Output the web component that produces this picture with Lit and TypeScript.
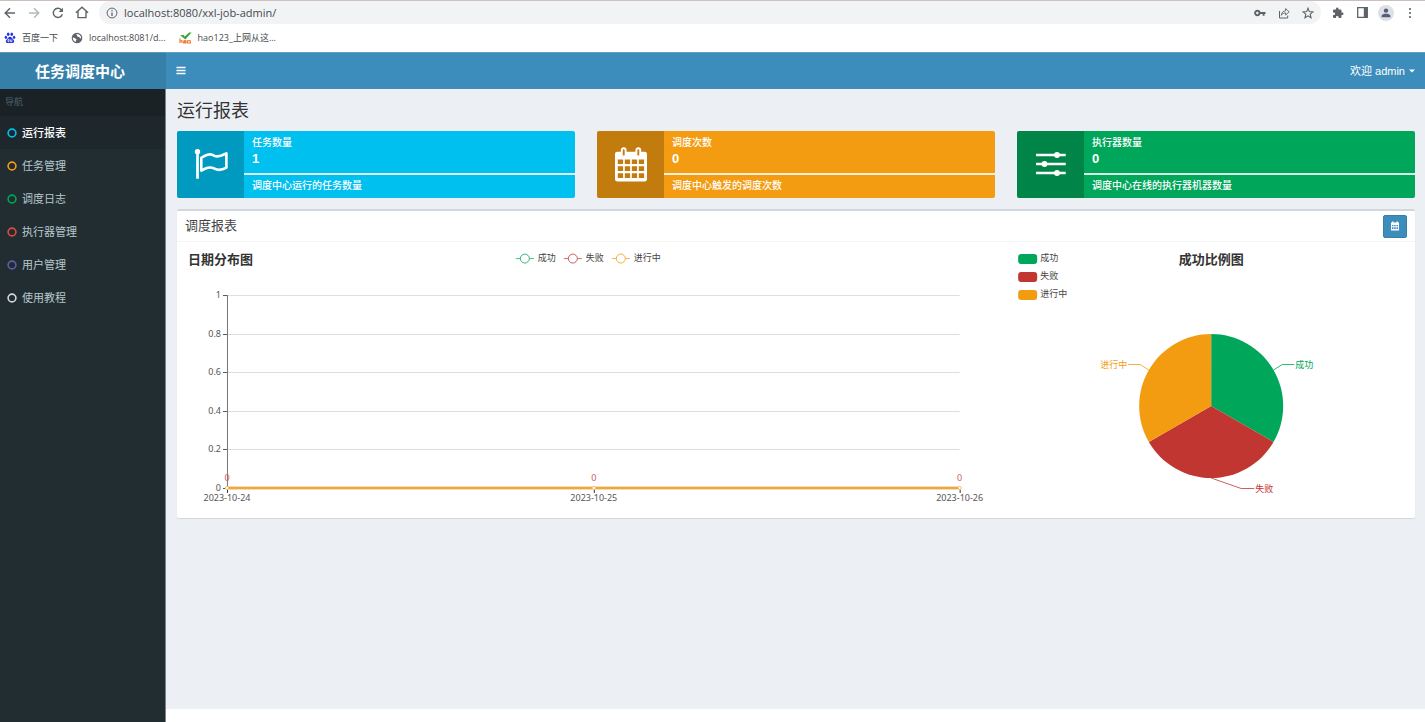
import { LitElement, html, svg, css } from "lit";
import type { TemplateResult } from "lit";
import { customElement, property, state } from "lit/decorators.js";
import { classMap } from "lit/directives/class-map.js";

const SUCCESS = "#00a65a";
const FAIL = "#c23632";
const RUNNING = "#f39c12";

const SERIES = [
  { name: "成功", color: SUCCESS },
  { name: "失败", color: FAIL },
  { name: "进行中", color: RUNNING },
];

/** Base for charts that redraw to the width of their column. */
class FluidChart extends LitElement {
  @state() protected width = 0;
  private observer?: ResizeObserver;

  connectedCallback() {
    super.connectedCallback();
    this.observer = new ResizeObserver((entries) => {
      this.width = Math.round(entries[0].contentRect.width);
    });
    this.observer.observe(this);
  }

  firstUpdated() {
    this.width = Math.round(this.getBoundingClientRect().width);
  }

  disconnectedCallback() {
    super.disconnectedCallback();
    this.observer?.disconnect();
  }

  static chartStyles = css`
    :host {
      display: block;
      min-width: 0;
      font-family: "Noto Sans CJK SC", sans-serif;
    }
    svg {
      display: block;
      width: 100%;
    }
    .title {
      font-size: 13px;
      font-weight: 700;
      fill: #333;
    }
    .label {
      font-size: 9px;
      fill: #444;
    }
    .tick {
      font-size: 9px;
      font-family: "Noto Sans", sans-serif;
      fill: #555;
    }
    .value {
      font-size: 9px;
      font-family: "Noto Sans", sans-serif;
      fill: #d0605e;
    }
    .end {
      text-anchor: end;
    }
    .middle {
      text-anchor: middle;
    }
  `;
}

@customElement("trend-chart")
export class TrendChart extends FluidChart {
  @property({ attribute: false }) dates: string[] = [];

  static styles = [FluidChart.chartStyles];

  render() {
    const w = this.width || 819;
    const left = 50;
    const right = w - 36;
    const top = 53;
    const bottom = 246;
    const ticks = [0, 0.2, 0.4, 0.6, 0.8, 1];
    const y = (v: number) => Math.round(bottom - v * (bottom - top));
    const x = (i: number) => Math.round(left + (i * (right - left)) / (this.dates.length - 1));
    const legendLeft = Math.round((w - 142) / 2);

    return html`<svg height="276" viewBox="0 0 ${w} 276" role="img" aria-label="日期分布图">
      <text class="title" x="11" y="22">日期分布图</text>
      ${SERIES.map((s, i) => {
        const sx = legendLeft + i * 48;
        return svg`<g>
          <path d="M${sx} 16.5h18" stroke=${s.color} stroke-opacity=".7" />
          <circle cx=${sx + 9} cy="16.5" r="4.5" fill="#fff" stroke=${s.color} stroke-opacity=".8" />
          <text class="label" x=${sx + 22} y="19">${s.name}</text>
        </g>`;
      })}
      ${ticks.map(
        (t) => svg`<g>
          <path d="M${left} ${y(t) + 0.5}H${right}" stroke="#ddd" />
          <path d="M${left - 4} ${y(t) + 0.5}h4" stroke="#555" />
          <text class="tick end" x=${left - 6} y=${y(t) + 3}>${t}</text>
        </g>`
      )}
      <path d="M${left + 0.5} ${top}V${bottom}" stroke="#777" />
      <path d="M${left} ${bottom}H${right}" stroke="#f8dcae" stroke-width="4" />
      <path d="M${left} ${bottom}H${right}" stroke="#eba744" stroke-width="2" />
      ${this.dates.map(
        (d, i) => svg`<g>
          <path d="M${x(i) + 0.5} ${bottom + 1}v4" stroke="#333" />
          <circle cx=${x(i)} cy=${bottom} r="1.6" fill="#fff" stroke="#f3be70" />
          <text class="value middle" x=${x(i)} y=${bottom - 7}>0</text>
          <text class="tick middle" x=${x(i)} y=${bottom + 13}>${d}</text>
        </g>`
      )}
    </svg>`;
  }
}

@customElement("ratio-chart")
export class RatioChart extends FluidChart {
  static styles = [FluidChart.chartStyles];

  render() {
    const w = this.width || 409;
    const cx = Math.round(w / 2);
    const cy = 164;
    const r = 72;
    const at = (turn: number) => {
      const a = turn * 2 * Math.PI;
      return `${(cx + r * Math.sin(a)).toFixed(2)} ${(cy - r * Math.cos(a)).toFixed(2)}`;
    };

    return html`<svg height="276" viewBox="0 0 ${w} 276" role="img" aria-label="成功比例图">
      ${SERIES.map(
        (s, i) => svg`<g>
          <rect x="12" y=${12 + i * 18} width="19" height="10" rx="3" fill=${s.color} />
          <text class="label" x="34" y=${19 + i * 18}>${s.name}</text>
          <path d="M${cx} ${cy}L${at(i / 3)}A${r} ${r} 0 0 1 ${at((i + 1) / 3)}Z" fill=${s.color} />
        </g>`
      )}
      <text class="title middle" x=${cx} y="22">成功比例图</text>
      <g fill="none" stroke-opacity=".8">
        <path d="M${at(1 / 6)}L${cx + 71} 122.5H${cx + 83}" stroke=${SUCCESS} />
        <path d="M${at(1 / 2)}L${cx + 30} 246.5H${cx + 43}" stroke=${FAIL} />
        <path d="M${at(5 / 6)}L${cx - 71} 122.5H${cx - 83}" stroke=${RUNNING} />
      </g>
      <g font-size="9">
        <text x=${cx + 84} y="126" fill=${SUCCESS}>成功</text>
        <text x=${cx + 44} y="250" fill=${FAIL}>失败</text>
        <text class="end" x=${cx - 84} y="126" fill=${RUNNING}>进行中</text>
      </g>
    </svg>`;
  }
}

const calendarCells = [0, 1, 2]
  .flatMap((row) => [0, 1, 2, 3].map((col) => `M${4.8 + col * 7} ${12.4 + row * 6.9}v4.7h5.3v-4.7z`))
  .join("");

const icons: Record<string, TemplateResult> = {
  flag: html`<svg width="36" height="36" viewBox="0 0 36 36" aria-hidden="true">
    <circle cx="4.5" cy="4.7" r="2.7" fill="#fff" />
    <path d="M4.5 5v26.800" stroke="#fff" stroke-width="2.7" />
    <path
      d="M8.300 10.800C12.500 8.200 16.500 5.800 21.500 8.800C25.500 10.800 29.500 8.300 33.400 6.400V20.600C29.500 22.800 26 24.200 21.500 21.600C16.500 19 12.500 21.300 8.300 23.700Z"
      fill="none" stroke="#fff" stroke-width="2.6" stroke-linejoin="round" />
  </svg>`,
  calendar: html`<svg width="36" height="36" viewBox="0 0 36 36" aria-hidden="true">
    <path fill="#fff" fill-rule="evenodd"
      d="M4.3 4.7h27.4a2.3 2.3 0 0 1 2.3 2.3v25.2a2.3 2.3 0 0 1-2.3 2.3H4.3a2.3 2.3 0 0 1-2.3-2.3V7a2.3 2.3 0 0 1 2.3-2.3z${calendarCells}" />
    <g fill="#c27d0e" stroke="#fff" stroke-width="1.9">
      <rect x="8.8" y="1.2" width="3.800" height="8.3" rx="1.8" />
      <rect x="23.4" y="1.2" width="3.800" height="8.3" rx="1.8" />
    </g>
  </svg>`,
  sliders: html`<svg width="36" height="36" viewBox="0 0 36 36" aria-hidden="true">
    <path d="M3 8h29.7M3 17h29.7M3 26h29.7" stroke="#fff" stroke-width="2.4" />
    <g fill="#fff"><circle cx="24" cy="8" r="2.9" /><circle cx="11.5" cy="17" r="2.9" /><circle cx="24" cy="26" r="2.9" /></g>
  </svg>`,
};

@customElement("info-card")
export class InfoCard extends LitElement {
  @property() icon = "";
  @property() tone = "";
  @property() label = "";
  @property() value = "";
  @property() note = "";

  static styles = css`
    :host {
      display: block;
      min-width: 0;
    }
    .card {
      display: grid;
      grid-template-columns: 67px 1fr;
      min-height: 67px;
      border-radius: 2px;
      overflow: hidden;
      color: #fff;
      font: 10px/14px "Liberation Sans", "Noto Sans CJK SC", sans-serif;
      font-weight: 500;
    }
    .aqua { background: #00c0ef; }
    .yellow { background: #f39c12; }
    .green { background: #00a65a; }
    .icon {
      display: grid;
      place-items: center;
      background: rgba(0, 0, 0, 0.2);
    }
    .top {
      padding: 5px 8px 6px;
    }
    .value {
      display: block;
      font-size: 13px;
      font-weight: 700;
      line-height: 17px;
    }
    .note {
      padding: 4px 8px;
      border-top: 2px solid rgba(255, 255, 255, 0.85);
    }
  `;

  render() {
    return html`<div class="card ${classMap({ [this.tone]: true })}">
      <span class="icon">${icons[this.icon]}</span>
      <div>
        <div class="top">${this.label}<b class="value">${this.value}</b></div>
        <div class="note">${this.note}</div>
      </div>
    </div>`;
  }
}

@customElement("browser-bar")
export class BrowserBar extends LitElement {
  static styles = css`
    :host {
      display: block;
      background: #fff;
      color: #45494d;
      font-family: "Open Sans", "Noto Sans CJK SC", sans-serif;
    }
    .toolbar {
      display: flex;
      align-items: center;
      height: 24px;
      box-sizing: border-box;
      padding-right: 3px;
      border-top: 1px solid #cdbfc0;
    }
    button {
      display: grid;
      place-items: center;
      width: 24px;
      height: 23px;
      padding: 0;
      border: 0;
      background: none;
      color: #5f6368;
    }
    .nav, .tools {
      display: flex;
    }
    .nav {
      padding-right: 5px;
      margin-left: -2px;
    }
    .tools {
      padding-left: 5px;
    }
    .dim { color: #b4b6b8; }
    .address {
      flex: 1;
      display: flex;
      align-items: center;
      height: 23px;
      padding: 0 1px 0 7px;
      border-radius: 12px;
      background: #f1f3f4;
    }
    input {
      flex: 1;
      min-width: 0;
      padding: 0 6px;
      border: 0;
      outline: 0;
      background: none;
      color: #45494d;
      font: 11px/20px "Open Sans", sans-serif;
    }
    .marks {
      display: flex;
      align-items: center;
      gap: 13px;
      height: 28px;
      padding-left: 4px;
    }
    a {
      display: flex;
      align-items: center;
      gap: 6px;
      color: inherit;
      font-size: 9px;
      line-height: 14px;
      text-decoration: none;
    }
  `;

  render() {
    return html`
      <div class="toolbar">
        <div class="nav">
          <button aria-label="后退"><svg width="12" height="12" viewBox="0 0 12 12" fill="none" stroke="currentColor" stroke-width="1.4"><path d="M11 6H1.5M6 1.2L1.2 6L6 10.8" /></svg></button>
          <button class="dim" aria-label="前进"><svg width="12" height="12" viewBox="0 0 12 12" fill="none" stroke="currentColor" stroke-width="1.4"><path d="M1 6h9.5M6 1.2L10.8 6L6 10.8" /></svg></button>
          <button aria-label="刷新"><svg width="12" height="12" viewBox="0 0 12 12" fill="none" stroke="currentColor" stroke-width="1.4"><path d="M10.3 7.3A4.6 4.6 0 1 1 9.3 2.8L10.4 4" /><path d="M10.9.8v4.3H6.6z" fill="currentColor" stroke="none" /></svg></button>
          <button aria-label="主页"><svg width="14" height="13" viewBox="0 0 14 13" fill="none" stroke="currentColor" stroke-width="1.4"><path d="M.9 6.8L7 1.2L13.1 6.8M3 5.5V11.6H11V5.5" /></svg></button>
        </div>
        <div class="address">
          <svg width="12" height="12" viewBox="0 0 12 12" aria-hidden="true" fill="none" stroke="#5f6368"><circle cx="6" cy="6" r="4.9" /><path d="M6 5.4V9M6 3v1.3" stroke-width="1.3" /></svg>
          <input type="text" aria-label="地址" value="localhost:8080/xxl-job-admin/" />
          <button aria-label="密码"><svg width="12" height="8" viewBox="0 0 12 8" fill="none" stroke="currentColor"><circle cx="3.3" cy="4" r="2.2" stroke-width="1.9" /><path d="M5.5 4H11.5M9.6 4v2.8" stroke-width="1.9" /></svg></button>
          <button aria-label="分享"><svg width="12" height="12" viewBox="0 0 12 12" fill="none" stroke="currentColor"><path d="M1.5 4V11h8.2V8.6" /><path d="M3.3 8.3C3.6 5.4 5.2 4 7.6 3.8V1.6L11.2 4.8L7.6 8V5.9C5.8 5.9 4.3 6.6 3.3 8.3z" stroke-width=".9" /></svg></button>
          <button aria-label="收藏"><svg width="12" height="12" viewBox="0 0 12 12" fill="none" stroke="currentColor" stroke-width="1.1"><path d="M6 1.3L7.3 4.6L10.9 4.9L8.2 7.2L9 10.7L6 8.8L3 10.7L3.8 7.2L1.1 4.9L4.7 4.6z" /></svg></button>
        </div>
        <div class="tools">
          <button aria-label="扩展程序"><svg width="12" height="12" viewBox="0 0 24 24" fill="currentColor"><path d="M20.5 11H19V7a2 2 0 0 0-2-2h-4V3.500a2.500 2.500 0 0 0-5 0V5H4a2 2 0 0 0-2 2v3.800h1.500a2.700 2.700 0 0 1 0 5.400H2V20a2 2 0 0 0 2 2h3.800v-1.500a2.700 2.700 0 0 1 5.400 0V22H17a2 2 0 0 0 2-2v-4h1.500a2.500 2.500 0 0 0 0-5z" /></svg></button>
          <button aria-label="侧边栏"><svg width="11" height="11" viewBox="0 0 11 11"><path d="M.7.700h9.600v9.600H.7z" fill="none" stroke="currentColor" stroke-width="1.3" /><path d="M6.800.7h3.500v9.600H6.800z" fill="currentColor" /></svg></button>
          <button aria-label="用户"><svg width="16" height="16" viewBox="0 0 16 16"><circle cx="8" cy="8" r="8" fill="#dde0e6" /><circle cx="8" cy="5.600" r="2.200" fill="#565f75" /><path d="M3.600 12.200V11C3.600 9.300 6.500 8.700 8 8.700S12.400 9.300 12.400 11v1.200z" fill="#565f75" /></svg></button>
          <button aria-label="菜单"><svg width="4" height="12" viewBox="0 0 4 12" fill="currentColor"><circle cx="2" cy="2" r="1.100" /><circle cx="2" cy="6" r="1.100" /><circle cx="2" cy="10" r="1.100" /></svg></button>
        </div>
      </div>
      <nav class="marks">
        <a href="#baidu"><svg width="12" height="12" viewBox="0 0 12 12" fill="#2932e1" aria-hidden="true"><ellipse cx="4.200" cy="2.300" rx="1.300" ry="1.800" /><ellipse cx="7.800" cy="2.300" rx="1.300" ry="1.800" /><ellipse cx="1.900" cy="5.300" rx="1.200" ry="1.600" /><ellipse cx="10.100" cy="5.300" rx="1.200" ry="1.600" /><path d="M6 4.800C7.500 4.800 8.200 6.500 9.500 7.700C11 9.200 9.800 11.300 8 11.100C6.500 10.900 5.500 10.900 4 11.100C2.200 11.300 1 9.200 2.500 7.700C3.800 6.500 4.500 4.800 6 4.800z" /><path d="M4.900 7.400H4v2.200h1V7M6.500 7.500v2.200h1.400V7.500" fill="none" stroke="#fff" stroke-width=".7" /></svg>百度一下</a>
        <a href="#local"><svg width="12" height="12" viewBox="0 0 12 12" aria-hidden="true"><circle cx="6" cy="6" r="5.300" fill="#5f6368" /><path d="M1.800 5.500C3.800 5.700 4.200 6.500 5.600 7.200C5.400 8.400 4.600 8.600 4.700 10C2.800 9.200 1.600 7.500 1.800 5.500zM5.300 1.900C5.300 3.200 6.500 3.300 6.300 4.300C6.900 5.300 8.600 4.600 8.900 6C9.300 6.500 10 6.400 10.200 6.300C10.300 4 8.500 1.800 5.300 1.900z" fill="#fff" /></svg>localhost:8081/d...</a>
        <a href="#hao123"><svg width="13" height="12" viewBox="0 0 13 12" aria-hidden="true"><path d="M1.200 3.200L4.300 2.800L5.700 4.400L10.200.6H12.600L6.300 7.600z" fill="#3fa535" /><path d="M1 6.500v4.500M1 8.700h2V11M4.500 8.700h2.200V11H4.700V9.700h2M8.300 8.700h3V11h-3z" fill="none" stroke="#f0702a" stroke-width="1.100" /></svg>hao123_上网从这...</a>
      </nav>
    `;
  }
}

const MENU = [
  { name: "运行报表", color: "#00c0ef", active: true },
  { name: "任务管理", color: "#f39c12" },
  { name: "调度日志", color: "#00a65a" },
  { name: "执行器管理", color: "#dd4b39" },
  { name: "用户管理", color: "#605ca8" },
  { name: "使用教程", color: "#d2d6de" },
];

@customElement("app-root")
export class AppRoot extends LitElement {
  @state() private collapsed = false;

  static styles = css`
    :host {
      display: flex;
      flex-direction: column;
      min-height: 100vh;
      background: #fff;
      color: #333;
      font: 11px/16px "Liberation Sans", "Noto Sans CJK SC", sans-serif;
    }
    button {
      padding: 0;
      border: 0;
      background: none;
      color: inherit;
      font: inherit;
    }
    h1, h2, ul {
      margin: 0;
      padding: 0;
      font-weight: 400;
    }
    .header {
      display: flex;
      height: 37px;
      background: #3c8dbc;
      color: #fff;
      box-shadow: inset 0 1px #5f9fc6;
    }
    .logo {
      display: grid;
      place-items: center;
      width: 166px;
      padding-right: 6px;
      box-sizing: border-box;
      background: #367fa9;
      color: #fff;
      font: 700 15px/21px "Noto Sans CJK SC", sans-serif;
      text-decoration: none;
      box-shadow: inset 0 1px #5b97b9;
    }
    .bar {
      flex: 1;
      display: flex;
      justify-content: space-between;
      padding: 0 10px;
    }
    .bar button {
      display: flex;
      align-items: center;
      gap: 4px;
    }
    .body {
      flex: 1;
      display: flex;
    }
    .side {
      flex: none;
      width: 166px;
      box-sizing: border-box;
      border-right: 1px solid #79838a;
      background: #222d32;
    }
    .section {
      padding: 5px 5px 6px;
      background: #1a2226;
      color: #4b646f;
      font-size: 9px;
    }
    .menu {
      list-style: none;
    }
    .item {
      display: flex;
      align-items: center;
      gap: 5px;
      height: 33px;
      padding-left: 7px;
      color: #b8c7ce;
      text-decoration: none;
    }
    .item.active {
      background: #1e282c;
      color: #fff;
      font-weight: 500;
    }
    .main {
      flex: 1;
      min-width: 0;
      display: flex;
      flex-direction: column;
    }
    .content {
      flex: 1;
      padding: 12px 10px 12px 11px;
      background: #ecf0f5;
    }
    h1 {
      font-size: 18px;
      line-height: 20px;
    }
    .cards {
      display: grid;
      grid-template-columns: repeat(3, 1fr);
      gap: 22px;
      margin: 10px 0 11px;
    }
    .panel {
      border-top: 2px solid #d2d6de;
      border-radius: 2px;
      background: #fff;
      box-shadow: 0 1px 1px rgba(0, 0, 0, 0.1);
    }
    .panel-head {
      display: flex;
      align-items: center;
      justify-content: space-between;
      height: 30px;
      padding: 0 8px;
      border-bottom: 1px solid #f4f4f4;
    }
    h2 {
      color: #444;
      font-size: 13px;
      line-height: 16px;
    }
    .range {
      display: grid;
      place-items: center;
      width: 24px;
      height: 23px;
      border: 1px solid #367fa9;
      border-radius: 2px;
      background: #3c8dbc;
      color: #fff;
    }
    .charts {
      display: grid;
      grid-template-columns: 2fr 1fr;
      gap: 10px;
    }
    .footer {
      height: 13px;
    }
  `;

  render() {
    return html`
      <browser-bar></browser-bar>
      <header class="header">
        <a class="logo" href="#home">任务调度中心</a>
        <div class="bar">
          <button aria-label="切换导航" @click=${() => (this.collapsed = !this.collapsed)}>
            <svg width="10" height="9" viewBox="0 0 10 9" stroke="#fff" stroke-width="1.6"><path d="M.5 1.500h9M.5 4.500h9M.5 7.500h9" /></svg>
          </button>
          <button>欢迎 admin
            <svg width="6" height="4" viewBox="0 0 6 4" fill="#fff" aria-hidden="true"><path d="M0 .5h6L3 3.500z" /></svg>
          </button>
        </div>
      </header>
      <div class="body">
        ${this.collapsed
          ? ""
          : html`<nav class="side">
              <div class="section">导航</div>
              <ul class="menu">
                ${MENU.map(
                  (m) => html`<li>
                    <a class="item ${classMap({ active: !!m.active })}" href="#${m.name}">
                      <svg width="10" height="10" viewBox="0 0 10 10" aria-hidden="true"><circle cx="5" cy="5" r="3.900" fill="none" stroke=${m.color} stroke-width="1.600" /></svg>${m.name}</a>
                  </li>`
                )}
              </ul>
            </nav>`}
        <div class="main">
          <main class="content">
            <h1>运行报表</h1>
            <div class="cards">
              <info-card icon="flag" tone="aqua" label="任务数量" value="1" note="调度中心运行的任务数量"></info-card>
              <info-card icon="calendar" tone="yellow" label="调度次数" value="0" note="调度中心触发的调度次数"></info-card>
              <info-card icon="sliders" tone="green" label="执行器数量" value="0" note="调度中心在线的执行器机器数量"></info-card>
            </div>
            <section class="panel">
              <div class="panel-head">
                <h2>调度报表</h2>
                <button class="range" aria-label="选择日期范围">
                  <svg width="10" height="10" viewBox="0 0 10 10" aria-hidden="true"><path fill="#fff" fill-rule="evenodd" d="M1 1.500h1V.5h1.500v1h3v-1H8v1h1V9.500H1zM1.900 4v1.200h1.600V4zM4.200 4v1.200h1.600V4zM6.500 4v1.200h1.600V4zM1.900 6.300v1.700h1.600V6.300zM4.200 6.300v1.700h1.600V6.300zM6.500 6.300v1.700h1.600V6.300z" /></svg>
                </button>
              </div>
              <div class="charts">
                <trend-chart .dates=${["2023-10-24", "2023-10-25", "2023-10-26"]}></trend-chart>
                <ratio-chart></ratio-chart>
              </div>
            </section>
          </main>
          <footer class="footer"></footer>
        </div>
      </div>
    `;
  }
}
